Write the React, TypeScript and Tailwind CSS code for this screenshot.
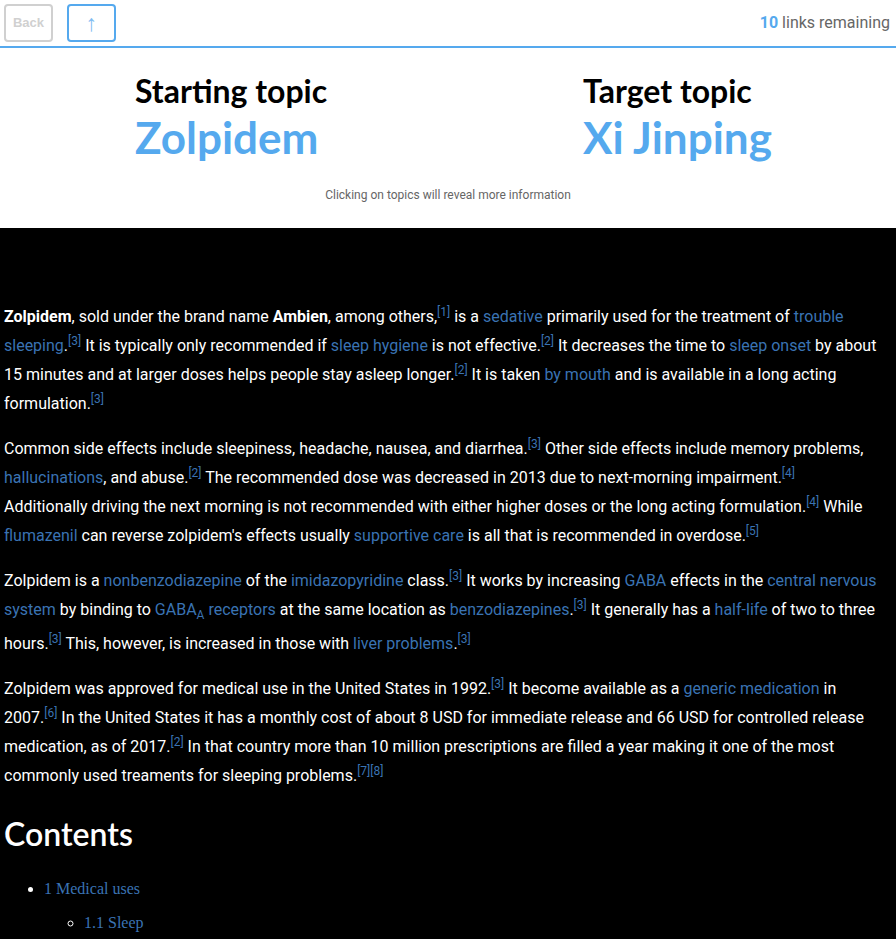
import React from 'react';

const link = 'text-[#3a73b3]';

function Ref({ n }: { n: string }) {
  return <sup className={`${link} text-[12px]`}>[{n}]</sup>;
}

function A({ children }: { children: React.ReactNode }) {
  return <a className={link}>{children}</a>;
}

export default function App() {
  return (
    <div className="min-h-screen bg-black font-['Roboto',sans-serif]">
      {/* top bar */}
      <div className="flex items-center justify-between bg-white px-[4px] h-[48px] border-b-2 border-[#55a9ee]">
        <div className="flex items-center gap-[14px]">
          <button className="w-[49px] h-[38px] rounded-[4px] border-2 border-[#d0d0d0] text-[13px] font-bold text-[#d0d0d0] font-['Liberation_Sans',sans-serif]">
            Back
          </button>
          <button className="w-[49px] h-[38px] rounded-[4px] border-2 border-[#55a9ee] text-[23px] text-[#7fbcf2] leading-none">
            ↑
          </button>
        </div>
        <div className="pr-[2px] text-[16px] text-[#666]">
          <span className="font-bold text-[#55a9ee]">10</span> links remaining
        </div>
      </div>

      {/* topics */}
      <div className="bg-white pt-[23px] pb-[24px]">
        <div className="grid grid-cols-2 font-['Lato',sans-serif]">
          <div className="pl-[135px]">
            <div className="text-[32px] font-bold text-black leading-[40px]">Starting topic</div>
            <div className="text-[44px] font-bold text-[#55a9ee] leading-[52px]">Zolpidem</div>
          </div>
          <div className="pl-[135px]">
            <div className="text-[32px] font-bold text-black leading-[40px]">Target topic</div>
            <div className="text-[44px] font-bold text-[#55a9ee] leading-[52px]">Xi Jinping</div>
          </div>
        </div>
        <p className="mt-[23px] text-center text-[12px] text-[#666]">Clicking on topics will reveal more information</p>
      </div>

      {/* article */}
      <div className="pl-[4px] pr-[16px] pt-[74px] text-white text-[16px] leading-[29px]">
        <p className="mb-4">
          <b>Zolpidem</b>, sold under the brand name <b>Ambien</b>, among others,<Ref n="1" /> is a <A>sedative</A> primarily
          used for the treatment of <A>trouble sleeping</A>.<Ref n="3" /> It is typically only recommended if{' '}
          <A>sleep hygiene</A> is not effective.<Ref n="2" /> It decreases the time to <A>sleep onset</A> by about 15 minutes
          and at larger doses helps people stay asleep longer.<Ref n="2" /> It is taken <A>by mouth</A> and is available in a
          long acting formulation.<Ref n="3" />
        </p>
        <p className="mb-4">
          Common side effects include sleepiness, headache, nausea, and diarrhea.<Ref n="3" /> Other side effects include
          memory problems, <A>hallucinations</A>, and abuse.<Ref n="2" /> The recommended dose was decreased in 2013 due to
          next-morning impairment.<Ref n="4" /> Additionally driving the next morning is not recommended with either higher
          doses or the long acting formulation.<Ref n="4" /> While <A>flumazenil</A> can reverse zolpidem's effects usually{' '}
          <A>supportive care</A> is all that is recommended in overdose.<Ref n="5" />
        </p>
        <p className="mb-4">
          Zolpidem is a <A>nonbenzodiazepine</A> of the <A>imidazopyridine</A> class.<Ref n="3" /> It works by increasing{' '}
          <A>GABA</A> effects in the <A>central nervous system</A> by binding to{' '}
          <A>
            GABA<sub className="bottom-0 align-[-4px] text-[12px] leading-[27px]">A</sub> receptors
          </A>{' '}
          at the same location as <A>benzodiazepines</A>.<Ref n="3" /> It generally has a <A>half-life</A> of two to three
          hours.<Ref n="3" /> This, however, is increased in those with <A>liver problems</A>.<Ref n="3" />
        </p>
        <p className="mb-4">
          Zolpidem was approved for medical use in the United States in 1992.<Ref n="3" /> It become available as a{' '}
          <A>generic medication</A> in 2007.<Ref n="6" /> In the United States it has a monthly cost of about 8 USD for
          immediate release and 66 USD for controlled release medication, as of 2017.<Ref n="2" /> In that country more
          than 10 million prescriptions are filled a year making it one of the most commonly used treaments for sleeping
          problems.<Ref n="7" />
          <Ref n="8" />
        </p>

        <h2 className="mt-[24px] font-['Lato',sans-serif] text-[32px] font-semibold leading-[40px]">Contents</h2>
        <ul className="mt-[25px] list-disc pl-[40px] font-['Liberation_Serif',serif] text-[16px] leading-[20px]">
          <li className="mb-[14px]">
            <A>1 Medical uses</A>
            <ul className="mt-[14px] list-[circle] pl-[40px]">
              <li>
                <A>1.1 Sleep</A>
              </li>
            </ul>
          </li>
        </ul>
      </div>
    </div>
  );
}
